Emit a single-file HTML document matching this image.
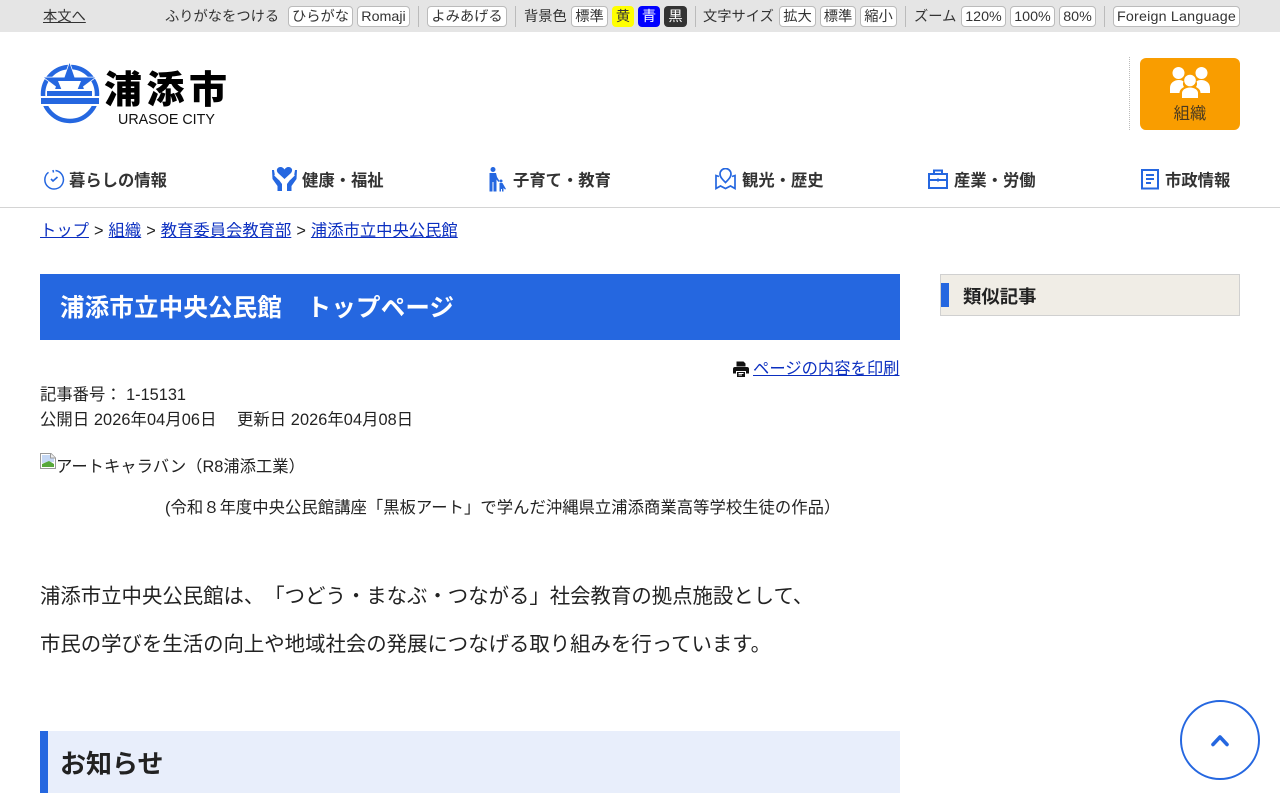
<!DOCTYPE html>
<html lang="ja">
<head>
<meta charset="utf-8">
<title>浦添市立中央公民館 トップページ</title>
<style>
html,body{margin:0;padding:0;background:#fff}
body{width:1280px;height:800px;overflow:hidden;position:relative;font-family:"Liberation Sans","Noto Sans CJK JP",sans-serif;color:#222;text-spacing-trim:space-all;font-feature-settings:"chws" 0,"halt" 0,"palt" 0}
.a{position:absolute;white-space:nowrap}
a{color:#0b2fc0;text-decoration:underline}
#bar{position:absolute;left:0;top:0;width:1280px;height:32px;background:#e5e5e5}
.t{position:absolute;top:7px;height:21px;line-height:21px;font-size:14.28px;color:#333;white-space:nowrap}
.b{position:absolute;top:6px;height:19px;line-height:21px;box-sizing:content-box;background:#fff;border:1px solid #bbb;border-radius:4px;font-size:14.28px;color:#333;text-align:center;white-space:nowrap}
.c{border:0;height:21px;line-height:23px}
.s{position:absolute;top:6px;width:1px;height:21px;background:#bbb}
.n{position:absolute;top:170px;height:22px;line-height:22px;font-size:16.32px;font-weight:bold;color:#333;white-space:nowrap}
.m{font-size:16.32px;line-height:22px}
</style>
</head>
<body>
<div id="bar"></div>
<a class="t" style="left:43px;color:#333" href="#">本文へ</a>
<div class="t" style="left:165px">ふりがなをつける</div>
<div class="b" style="left:288px;width:63px">ひらがな</div>
<div class="b" style="left:357px;width:51px">Romaji</div>
<div class="s" style="left:418px"></div>
<div class="b" style="left:427px;width:78px">よみあげる</div>
<div class="s" style="left:515px"></div>
<div class="t" style="left:524px">背景色</div>
<div class="b" style="left:571px;width:35px">標準</div>
<div class="b c" style="left:612px;width:22px;background:#ff0">黄</div>
<div class="b c" style="left:638px;width:22px;background:#00f;color:#fff">青</div>
<div class="b c" style="left:664px;width:23px;background:#333;color:#fff">黒</div>
<div class="s" style="left:695px"></div>
<div class="t" style="left:703px">文字サイズ</div>
<div class="b" style="left:779px;width:35px">拡大</div>
<div class="b" style="left:820px;width:34px">標準</div>
<div class="b" style="left:860px;width:35px">縮小</div>
<div class="s" style="left:905px"></div>
<div class="t" style="left:914px">ズーム</div>
<div class="b" style="left:961px;width:43px">120%</div>
<div class="b" style="left:1010px;width:43px">100%</div>
<div class="b" style="left:1059px;width:35px">80%</div>
<div class="s" style="left:1104px"></div>
<div class="b" style="left:1113px;width:125px;letter-spacing:.2px">Foreign Language</div>

<svg class="a" style="left:40px;top:62px" width="60" height="64" viewBox="0 0 60 64">
<circle cx="30" cy="32" r="27" fill="none" stroke="#2567e0" stroke-width="4.500"/>
<path d="M29.500 1L34.500 15.500H55L43 24.500L45 30H14L16 24.500L4 15.500H24.500Z" fill="#2567e0" stroke="#fff" stroke-width="1.500" paint-order="stroke"/>
<path d="M18 19H41L37.500 27.500H21.500Z" fill="#fff"/>
<rect x="10" y="27" width="40" height="2" fill="#fff"/>
<rect x="7" y="29" width="45" height="5" fill="#2567e0"/>
<rect x="0" y="34" width="60" height="2" fill="#fff"/>
<rect x="1" y="36" width="58" height="6" fill="#2567e0"/>
<rect x="0" y="42" width="60" height="2" fill="#fff"/>
</svg>
<div class="a" style="left:104px;top:65px;font-family:'Noto Sans CJK JP',sans-serif;font-size:38px;line-height:44px;font-weight:900;color:#000;letter-spacing:4.500px">浦添市</div>
<div class="a" style="left:118px;top:111px;font-size:14.300px;line-height:18px;color:#111">URASOE CITY</div>

<div class="a" style="left:1129px;top:57px;height:73px;border-left:1px dotted #bbb"></div>
<div class="a" style="left:1140px;top:58px;width:100px;height:72px;background:#f99d00;border-radius:6px"></div>
<svg class="a" style="left:1170px;top:66px" width="40" height="36" viewBox="0 0 40 36">
<g fill="#fff"><circle cx="8.500" cy="7" r="6"/><circle cx="31.500" cy="7" r="6"/><path d="M0 27V22C0 17 4 14 9 14C11 14 12.500 14.500 13.500 15.500C12.500 17.500 13 19.500 14 21C11 22.500 9.500 24.500 9.500 27Z"/><path d="M40 27V22C40 17 36 14 31 14C29 14 27.500 14.500 26.500 15.500C27.500 17.500 27 19.500 26 21C29 22.500 30.500 24.500 30.500 27Z"/><circle cx="20" cy="14.500" r="5.800"/><path d="M12 32V27C12 24 15.500 21.500 20 21.500C24.500 21.500 28 24 28 27V32Z"/></g>
</svg>
<div class="a" style="left:1140px;top:104px;width:100px;text-align:center;font-size:16.32px;line-height:20px;color:#4a3a20">組織</div>

<svg class="a" style="left:43px;top:169px" width="22" height="22" viewBox="0 0 22 22" fill="none" stroke="#2567e0" stroke-width="1.500">
<path d="M12.500 1.500A9.300 9.300 0 1 1 5.500 3.300"/><path d="M8 10L10 12L14.500 8" stroke-width="1.600"/><path d="M10 1L10.500 3.500" />
</svg>
<div class="n" style="left:69px">暮らしの情報</div>

<svg class="a" style="left:271px;top:167px" width="27" height="25" viewBox="0 0 27 25" fill="#2567e0">
<path d="M13.500 12L7 6C4.500 3 6.500 0 9.500 0C11.200 0 12.700 1 13.500 2.500C14.300 1 15.800 0 17.500 0C20.500 0 22.500 3 20 6Z"/>
<path d="M1 3L3 3L4 9L8 13L11 17V24H6.500V19L1.500 12Z"/>
<path d="M26 3L24 3L23 9L19 13L16 17V24H20.500V19L25.500 12Z"/>
<path d="M3.500 8L8 12.500" stroke="#fff" fill="none"/><path d="M23.500 8L19 12.500" stroke="#fff" fill="none"/>
</svg>
<div class="n" style="left:302px">健康・福祉</div>

<svg class="a" style="left:487px;top:167px" width="21" height="25" viewBox="0 0 21 25" fill="#2567e0">
<circle cx="6" cy="2.500" r="2.500"/><path d="M2.500 6H9L10 10L12.500 14L11.500 15L9.500 12.500V24.500H6.500V15H5.500V24.500H2.500Z"/>
<circle cx="14" cy="14" r="1.500"/><path d="M12.500 16L15.500 16L19 22L18 22.500L16.500 21V24.500H15V22H14V24.500H12.500Z"/>
</svg>
<div class="n" style="left:513px">子育て・教育</div>

<svg class="a" style="left:715px;top:168px" width="21" height="22" viewBox="0 0 21 22" fill="none" stroke="#2567e0" stroke-width="1.700">
<path d="M10.500 14.500C7.500 11.500 5 9 5 6A5.500 5.500 0 0 1 16 6C16 9 13.500 11.500 10.500 14.500Z"/>
<path d="M4 8.500L1 7.500V20.500L5.500 18L10.500 20.500L15.500 18L20 20.500V7.500L17 8.500"/>
</svg>
<div class="n" style="left:742px">観光・歴史</div>

<svg class="a" style="left:928px;top:169px" width="20" height="21" viewBox="0 0 20 21" fill="none" stroke="#2567e0" stroke-width="2">
<rect x="1" y="5" width="18" height="14"/><path d="M1 11H19"/><path d="M6 5V1.500H14V5"/><path d="M10 9.500V12.500" />
</svg>
<div class="n" style="left:954px">産業・労働</div>

<svg class="a" style="left:1141px;top:169px" width="18" height="21" viewBox="0 0 18 21" fill="none" stroke="#2567e0" stroke-width="2">
<rect x="1" y="1" width="16" height="18.500"/><path d="M5 6H13M5 10H13M5 14H10"/>
</svg>
<div class="n" style="left:1165px">市政情報</div>

<div class="a" style="left:0;top:207px;width:1280px;height:1px;background:#d4d4d4"></div>

<div class="a m" style="left:40px;top:220px;word-spacing:.5px"><a href="#">トップ</a> &gt; <a href="#">組織</a> &gt; <a href="#">教育委員会教育部</a> &gt; <a href="#">浦添市立中央公民館</a></div>

<div class="a" style="left:40px;top:274px;width:860px;height:66px;background:#2567e0"></div>
<div class="a" style="left:60px;top:292px;font-size:24.48px;line-height:34px;font-weight:bold;color:#fff;letter-spacing:.2px">浦添市立中央公民館　トップページ</div>

<svg class="a" style="left:733px;top:361px" width="16" height="16" viewBox="0 0 16 16" fill="#111">
<path d="M3.500 0.500H10.500L12.500 2.500V5.500H3.500Z"/><path d="M2 6H14A2 2 0 0 1 16 8V12.500H13V10H3V12.500H0V8A2 2 0 0 1 2 6Z"/><path d="M4 11H12V16H4Z"/><path d="M5.500 12.500H10.500M5.500 14H9" stroke="#fff" stroke-width="1"/>
</svg>
<a class="a m" style="left:753px;top:358px" href="#">ページの内容を印刷</a>

<div class="a m" style="left:40px;top:384px">記事番号： 1-15131</div>
<div class="a m" style="left:40px;top:409px;letter-spacing:.1px">公開日 2026年04月06日</div>
<div class="a m" style="left:237px;top:409px;letter-spacing:.08px">更新日 2026年04月08日</div>

<svg class="a" style="left:40px;top:453px" width="16" height="16" viewBox="0 0 16 16">
<path d="M0.500 0.500H11L15.500 5V15.500H0.500Z" fill="#fff" stroke="#999"/><path d="M2 2H10.500L14 5.500V9L2 10Z" fill="#c5d8f5"/><path d="M2 14V11L9 8L14 11V14Z" fill="#57a83a"/><path d="M10.500 0.500V5H15.500" fill="#eee" stroke="#999"/>
</svg>
<div class="a m" style="left:56px;top:456px">アートキャラバン（R8浦添工業）</div>
<div class="a m" style="left:165px;top:497px;letter-spacing:.05px">(令和８年度中央公民館講座「黒板アート」で学んだ沖縄県立浦添商業高等学校生徒の作品）</div>

<div class="a" style="left:40px;top:582px;font-size:20.4px;line-height:30px">浦添市立中央公民館は、「つどう・まなぶ・つながる」社会教育の拠点施設として、</div>
<div class="a" style="left:40px;top:630px;font-size:20.4px;line-height:30px">市民の学びを生活の向上や地域社会の発展につなげる取り組みを行っています。</div>

<div class="a" style="left:40px;top:731px;width:860px;height:62px;background:#e8eefb"></div>
<div class="a" style="left:40px;top:731px;width:8px;height:62px;background:#2567e0"></div>
<div class="a" style="left:60px;top:747px;font-size:26px;line-height:34px;font-weight:bold">お知らせ</div>

<div class="a" style="left:940px;top:274px;width:298px;height:40px;background:#f0ede6;border:1px solid #d0d0d0"></div>
<div class="a" style="left:941px;top:283px;width:8px;height:24px;background:#2567e0"></div>
<div class="a" style="left:963px;top:285px;font-size:18.36px;line-height:24px;font-weight:bold">類似記事</div>

<div class="a" style="left:1180px;top:700px;width:76px;height:76px;border:2px solid #2567e0;border-radius:50%;background:#fff"></div>
<svg class="a" style="left:1210px;top:732px" width="20" height="16" viewBox="0 0 20 16" fill="none" stroke="#2567e0" stroke-width="3.600" stroke-linecap="round" stroke-linejoin="round">
<path d="M3 12.500L10 5L17 12.500"/>
</svg>
</body>
</html>
